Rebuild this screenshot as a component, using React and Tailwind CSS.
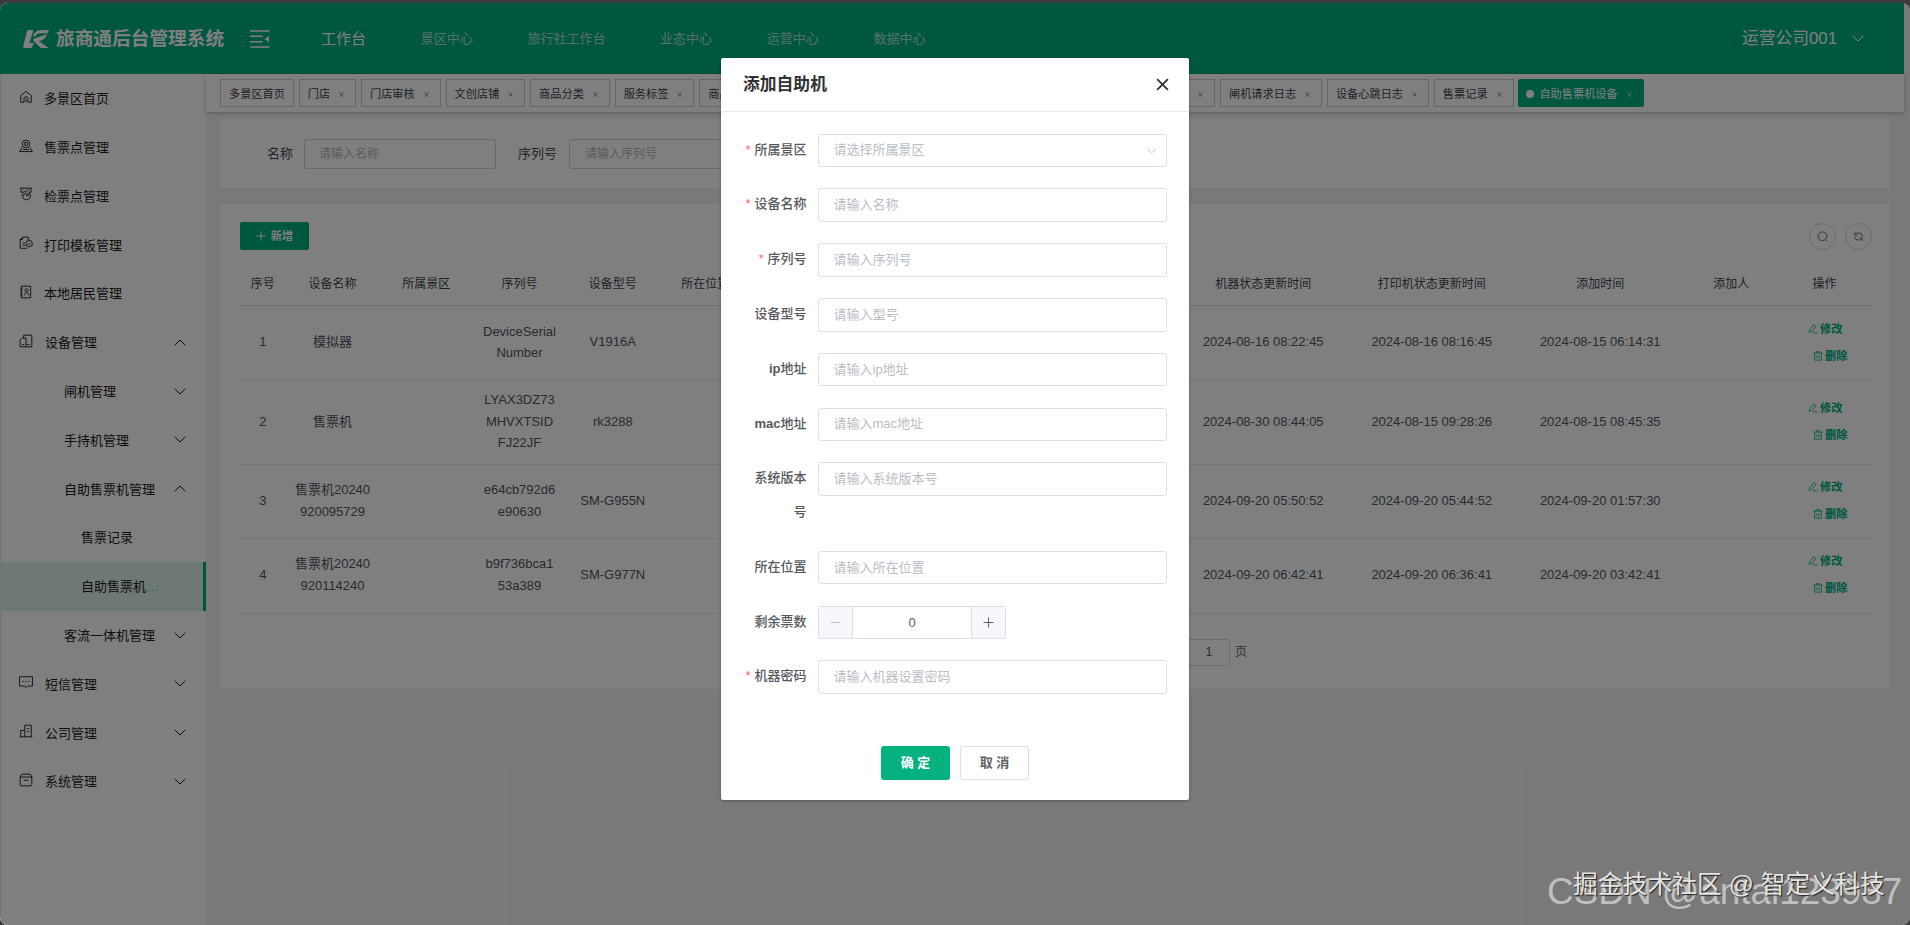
import { useState } from 'react'
import clsx from 'clsx'

// Stroke icon on a 24 grid
const Icon = ({ children, className = '', width = 1.6, box = '0 0 24 24' }) => (
  <svg viewBox={box} className={className} fill="none" stroke="currentColor" strokeWidth={width}>
    {children}
  </svg>
)

const Chevron = ({ up = false, className = '' }) => (
  <svg viewBox="0 0 12 7" className={className} fill="none" stroke="currentColor" strokeWidth="1">
    <path d={up ? 'M0.7 6.2L6 1l5.3 5.2' : 'M0.7 0.8L6 6l5.3-5.2'} />
  </svg>
)

const icons = {
  home: (
    <>
      <path d="M3 9.5L12 2.5l9 7V21h-5.5M3 9.5V21h5.5" />
      <path d="M8.5 21v-6a3.5 3.5 0 0 1 7 0v6M12 21v-6" />
    </>
  ),
  booth: (
    <>
      <circle cx="12" cy="8.5" r="6.5" />
      <circle cx="12" cy="8.5" r="2.8" />
      <path d="M6 14l-5 7.5h22L18 14M7 18h10" />
    </>
  ),
  check: (
    <>
      <path d="M2 2h20M3.5 2v7h5M20.5 2v7h-4M8 6l3 3 6-5" />
      <path d="M6 12c0 6 2 10 6.5 10s7-3 7-7v-3H8.5M6 15l3-3M12 15h5" />
    </>
  ),
  print: (
    <>
      <path d="M14 21H2V6l4-4h10v5M6 2v4H2" />
      <circle cx="17.5" cy="13" r="5.5" />
      <path d="M15 13l2 2 3-3.5M6 12h4M6 16h5" />
    </>
  ),
  resident: (
    <>
      <path d="M4 2h16v20H4zM2 7h4M2 12h4M2 17h4" />
      <circle cx="13" cy="9" r="2.6" />
      <path d="M9 18c0-6 8-6 8 0" />
    </>
  ),
  device: (
    <>
      <path d="M8 7V2h14v20H2V10l3-3h7v15" />
      <path d="M5.5 18H9M14 18h4" />
    </>
  ),
  message: (
    <>
      <path d="M1 3h22v16h-8.5l-2.5 2.5L9.5 19H1z" />
      <path d="M5.5 11H8M10.8 11h2.5M16 11h2.5" />
    </>
  ),
  company: (
    <>
      <path d="M1 22h22M10 22V2h11v20M3 22V11h7" />
      <path d="M14 8h3.5M14 13h3.5" />
    </>
  ),
  system: (
    <>
      <path d="M2 7v13q0 2 2 2h16q2 0 2-2V7zM2 7l3-5h14l3 5" />
      <path d="M8 12.5h8" />
    </>
  ),
}

const menu = [
  { label: '多景区首页', icon: 'home', level: 1 },
  { label: '售票点管理', icon: 'booth', level: 1 },
  { label: '检票点管理', icon: 'check', level: 1 },
  { label: '打印模板管理', icon: 'print', level: 1 },
  { label: '本地居民管理', icon: 'resident', level: 1 },
  { label: '设备管理', icon: 'device', level: 1, arrow: 'up' },
  { label: '闸机管理', level: 2, arrow: 'down' },
  { label: '手持机管理', level: 2, arrow: 'down' },
  { label: '自助售票机管理', level: 2, arrow: 'up' },
  { label: '售票记录', level: 3 },
  { label: '自助售票机', level: 3, active: true },
  { label: '客流一体机管理', level: 2, arrow: 'down' },
  { label: '短信管理', icon: 'message', level: 1, arrow: 'down' },
  { label: '公司管理', icon: 'company', level: 1, arrow: 'down' },
  { label: '系统管理', icon: 'system', level: 1, arrow: 'down' },
]

const navs = ['景区中心', '旅行社工作台', '业态中心', '运营中心', '数据中心']

const tabs = [
  { label: '多景区首页', fixed: true },
  { label: '门店' },
  { label: '门店审核' },
  { label: '文创店铺' },
  { label: '商品分类' },
  { label: '服务标签' },
  { label: '商品', wide: true },
  { label: '闸机请求日志' },
  { label: '设备心跳日志' },
  { label: '售票记录' },
  { label: '自助售票机设备', active: true },
]

const rows = [
  { h: 'h-[75px]', name: ['模拟器'], sn: ['DeviceSerial', 'Number'], model: 'V1916A', t1: '2024-08-16 08:22:45', t2: '2024-08-16 08:16:45', t3: '2024-08-15 06:14:31' },
  { h: 'h-[84px]', name: ['售票机'], sn: ['LYAX3DZ73', 'MHVXTSID', 'FJ22JF'], model: 'rk3288', t1: '2024-08-30 08:44:05', t2: '2024-08-15 09:28:26', t3: '2024-08-15 08:45:35' },
  { h: 'h-[74.3px]', name: ['售票机20240', '920095729'], sn: ['e64cb792d6', 'e90630'], model: 'SM-G955N', t1: '2024-09-20 05:50:52', t2: '2024-09-20 05:44:52', t3: '2024-09-20 01:57:30' },
  { h: 'h-[74.3px]', name: ['售票机20240', '920114240'], sn: ['b9f736bca1', '53a389'], model: 'SM-G977N', t1: '2024-09-20 06:42:41', t2: '2024-09-20 06:36:41', t3: '2024-09-20 03:42:41' },
]

const grid =
  'grid grid-cols-[45.5px_94px_93.5px_93px_93.5px_91.5px_428px_168.5px_168.5px_168.5px_93.5px_93px] items-center text-center'

const Header = () => (
  <header className="flex h-[71px] shrink-0 items-center bg-[#00ae7e] text-white">
    <svg viewBox="0 0 26 20" className="ml-[23px] h-5 w-[26px]" fill="currentColor">
      <path d="M5 1h5.5L6.5 14H11L8.5 19H1.5Q-0.3 19 0.3 16.5L3.5 4Q4 1.500 5 1z" />
      <path d="M10 7Q12 1 18 1h8l-1.5 3.2H17Q13 4.2 12 8z" />
      <path d="M10 10l14-5q-1.5 6-8 7L25.5 19H18l-7.5-7z" />
    </svg>
    <h1 className="ml-[7px] mt-[2px] w-[168px] whitespace-nowrap text-[18.7px] font-bold">旅商通后台管理系统</h1>
    <svg viewBox="0 0 20 18" className="ml-[26px] mt-px h-[18px] w-5" fill="none" stroke="currentColor" strokeWidth="1.6">
      <path d="M0 1h19.5M0 6.3h12.5M0 11.7h12.5M0 17h19.5" />
      <path d="M19 6v6l-4.5-3z" fill="currentColor" stroke="none" />
    </svg>
    <nav className="ml-[51px] flex items-center gap-[54.7px]">
      <span className="mt-px text-[15px]">工作台</span>
      {navs.map(n => (
        <span key={n} className="text-[13px] text-white/65">{n}</span>
      ))}
    </nav>
    <div className="ml-auto mr-[40px] flex items-center text-[16.8px]">
      运营公司001
      <Chevron className="ml-[15px] h-[7px] w-3" />
    </div>
  </header>
)

const Sidebar = () => (
  <aside className="w-[206px] shrink-0 border-l border-[#e4e4e4] bg-white text-[13px] text-[#1c1c1c]">
    {menu.map(m => (
      <div
        key={m.label + m.level}
        className={clsx(
          'flex h-[48.8px] items-center',
          m.level === 1 && 'pl-[18px]',
          m.level === 2 && 'pl-[63px]',
          m.level === 3 && 'pl-[80px]',
          m.active && 'border-r-[3px] border-[#00ae7e] bg-[#dcf2ea]'
        )}
      >
        {m.icon && (
          <Icon className={clsx('mb-[3px] h-[14px] w-[14px]', m.arrow ? 'mr-3' : 'mr-[11px]')} width={1.6}>
            {icons[m.icon]}
          </Icon>
        )}
        <span className="pt-px">{m.label}</span>
        {m.active && <span className="text-[#9ab5ab]">…</span>}
        {m.arrow && <Chevron up={m.arrow === 'up'} className="ml-auto mr-5 h-[7px] w-3" />}
      </div>
    ))}
  </aside>
)

const TabBar = () => (
  <div className="relative z-10 flex h-[38px] shrink-0 items-center gap-[4.8px] bg-white pl-[14px] text-[11.2px] text-[#3a3f46] shadow-[0_1px_4px_rgba(0,0,0,0.25)]">
    {tabs.map(t => (
      <div
        key={t.label}
        className={clsx(
          'flex h-7 shrink-0 items-center whitespace-nowrap border px-2 pt-[2px]',
          t.active ? 'rounded-[2px] border-[#00ae7e] bg-[#00ae7e] text-white' : 'border-[#c9cdd1]',
          t.wide && 'w-[516px]'
        )}
      >
        {t.active && <span className="-ml-px mr-[5px] h-2 w-2 rounded-full bg-white" />}
        {t.label}
        {!t.fixed && (
          <svg viewBox="0 0 6 6" className={clsx('mr-[3px] h-[5px] w-[5px]', t.wide ? 'ml-auto' : 'ml-[9px]')} fill="none" stroke="currentColor" strokeWidth="0.8">
            <path d="M0.5 0.5l5 5M5.5 0.5l-5 5" />
          </svg>
        )}
      </div>
    ))}
  </div>
)

const Lines = ({ items = [] }) => (
  <div className="leading-[21.5px]">
    {items.map(t => (
      <div key={t}>{t}</div>
    ))}
  </div>
)

const Actions = () => (
  <div className="flex flex-col gap-[11px] pl-[30px] text-[11.2px] font-bold leading-4 text-[#00ae7e]">
    <div className="flex items-center gap-[2px]">
      <Icon className="h-[10px] w-[10px]" width={2}>
        <path d="M3 20l1-6L14 2l5 4L9 18l-6 2zM12 21h11" />
      </Icon>
      修改
    </div>
    <div className="ml-[5px] flex items-center gap-[2px]">
      <Icon className="h-[10px] w-[10px]" width={2}>
        <path d="M1 5h22M8 5V1.5h8V5M4 5v17h16V5M9.5 10v8M14.5 10v8" />
      </Icon>
      删除
    </div>
  </div>
)

const DeviceTable = () => (
  <div className="text-[13px] text-[#51555c]">
    <div className={clsx(grid, 'h-[43px] border-b border-[#d8dce3] text-[12px] text-[#40444a]')}>
      <span>序号</span>
      <span>设备名称</span>
      <span>所属景区</span>
      <span>序列号</span>
      <span>设备型号</span>
      <span>所在位置</span>
      <span />
      <span>机器状态更新时间</span>
      <span>打印机状态更新时间</span>
      <span>添加时间</span>
      <span>添加人</span>
      <span>操作</span>
    </div>
    {rows.map((r, i) => (
      <div key={r.t1} className={clsx(grid, r.h, 'border-b border-[#e6e9ee] pb-[2px]')}>
        <span>{i + 1}</span>
        <Lines items={r.name} />
        <span />
        <Lines items={r.sn} />
        <span>{r.model}</span>
        <span />
        <span />
        <span>{r.t1}</span>
        <span>{r.t2}</span>
        <span>{r.t3}</span>
        <span />
        <Actions />
      </div>
    ))}
  </div>
)

const Content = () => (
  <main className="flex-1 bg-[#f3f3f3] pl-[14px] pr-[14px] pt-[7px]">
    <section className="flex h-[69px] items-center bg-white pl-[47px] pt-px text-[13px] text-[#4a4d52]">
      <span>名称</span>
      <div className="ml-[11px] flex h-[30px] w-[192px] items-center rounded-[3px] border border-[#ccd0d6] pl-[14px] text-[12px] text-[#b3b7be]">
        请输入名称
      </div>
      <span className="ml-[22px]">序列号</span>
      <div className="ml-[12px] flex h-[30px] w-[192px] items-center rounded-[3px] border border-[#ccd0d6] pl-[15px] text-[12px] text-[#b3b7be]">
        请输入序列号
      </div>
    </section>

    <section className="mt-4 h-[485px] bg-white pl-5 pr-[18px] pt-[18px]">
      <div className="flex h-7 items-center justify-between">
        <button className="flex h-7 w-[69px] items-center justify-center gap-[5px] rounded-[2px] bg-[#00ae7e] text-[11.2px] font-bold text-white">
          <Icon className="h-[10px] w-[10px]" width={2.4}>
            <path d="M12 1v22M1 12h22" />
          </Icon>
          新增
        </button>
        <div className="flex gap-[9px] text-[#606266]">
          <button className="flex h-[27px] w-[27px] items-center justify-center rounded-full border border-[#d5d8dd]">
            <Icon className="h-[11px] w-[11px]" width={2}>
              <circle cx="12" cy="11.5" r="9.5" />
              <path d="M18 18l4 4" />
            </Icon>
          </button>
          <button className="flex h-[27px] w-[27px] items-center justify-center rounded-full border border-[#d5d8dd]">
            <Icon className="h-[11px] w-[11px]" width={2}>
              <path d="M4 3v6h6M4.5 8.5Q7 4 12 4q8 0 8.5 8" />
              <path d="M20 21v-6h-6M19.5 15.5Q17 20 12 20q-8 0-8.5-8" />
            </Icon>
          </button>
        </div>
      </div>
      <div className="mt-[13px]">
        <DeviceTable />
      </div>
      <div className="mt-[25px] flex h-[27px] items-center justify-end pr-[625px] text-[12px] text-[#606266]">
        <span className="flex h-[27px] w-[42px] items-center justify-center rounded-[2px] border border-[#d5d8dd] text-[13px]">1</span>
        <span className="ml-[5px]">页</span>
      </div>
    </section>
  </main>
)

const Field = ({ label, latin = '', required = false, children }) => (
  <div className="mb-[21.2px] flex">
    <label className="-mt-px mb-px w-[74.5px] shrink-0 pl-[12px] text-right font-medium leading-[33.6px] text-[#55575c]">
      <span className="flex justify-end">
        {required && <span className="mr-1 font-normal text-[#f56c6c]">*</span>}
        <span className="max-w-[53px]">
          {latin && <b>{latin}</b>}
          {label}
        </span>
      </span>
    </label>
    <div className="ml-[11.5px] flex-1">{children}</div>
  </div>
)

const fields = [
  { key: 'scenic', label: '所属景区', hint: '请选择所属景区', required: true, select: true },
  { key: 'name', label: '设备名称', hint: '请输入名称', required: true },
  { key: 'sn', label: '序列号', hint: '请输入序列号', required: true },
  { key: 'model', label: '设备型号', hint: '请输入型号' },
  { key: 'ip', latin: 'ip', label: '地址', hint: '请输入ip地址' },
  { key: 'mac', latin: 'mac', label: '地址', hint: '请输入mac地址' },
  { key: 'version', label: '系统版本号', hint: '请输入系统版本号' },
  { key: 'position', label: '所在位置', hint: '请输入所在位置' },
]

const inputClass =
  'block h-[33.6px] w-full rounded-[3px] border border-[#dcdfe6] bg-white px-[14.5px] pb-px text-[13px] text-[#606266] outline-none placeholder:text-[#b9bdc5]'

const AddDialog = () => {
  const [form, setForm] = useState({})
  const [count, setCount] = useState(0)

  const handleChange = (e) => {
    const { name, value } = e.target
    setForm(prev => ({ ...prev, [name]: value }))
  }

  return (
    <div className="absolute left-[721px] top-[58px] h-[742px] w-[468px] rounded-[2px] bg-white text-[13px] shadow-[0_1px_3px_rgba(0,0,0,0.3)]">
      <div className="flex h-[54px] items-center justify-between border-b border-[#ebebeb] pl-[22px] pr-[20px] text-[#303133]">
        <h2 className="text-[16.8px] font-bold">添加自助机</h2>
        <Icon className="h-[13px] w-[13px]" width={3.2}>
          <path d="M2 2l20 20M22 2L2 22" />
        </Icon>
      </div>
      <div className="pl-[11px] pr-[22px] pt-[21.7px]">
        {fields.map(f => (
          <Field key={f.key} label={f.label} latin={f.latin} required={f.required}>
            <div className="relative">
              <input
                name={f.key}
                value={form[f.key] || ''}
                onChange={handleChange}
                placeholder={f.hint}
                className={inputClass}
              />
              {f.select && <Chevron className="absolute right-[10px] top-[14px] h-[6px] w-[11px] text-[#b8bcc4]" />}
            </div>
          </Field>
        ))}
        <Field label="剩余票数">
          <div className="flex h-[33.6px] w-[188px] overflow-hidden rounded-[3px] border border-[#dcdfe6] text-[#606266]">
            <button
              className="flex w-[34px] items-center justify-center border-r border-[#dcdfe6] bg-[#f5f7fa] text-[#c0c4cc]"
              onClick={() => setCount(Math.max(0, count - 1))}
            >
              <Icon className="h-[11px] w-[11px]" width={2.2}><path d="M1 12h22" /></Icon>
            </button>
            <span className="flex flex-1 items-center justify-center">{count}</span>
            <button
              className="flex w-[34px] items-center justify-center border-l border-[#dcdfe6] bg-[#f5f7fa]"
              onClick={() => setCount(count + 1)}
            >
              <Icon className="h-[11px] w-[11px]" width={2.2}><path d="M12 1v22M1 12h22" /></Icon>
            </button>
          </div>
        </Field>
        <Field label="机器密码" required>
          <input
            name="password"
            value={form.password || ''}
            onChange={handleChange}
            placeholder="请输入机器设置密码"
            className={inputClass}
          />
        </Field>
      </div>
      <div className="mt-[52px] flex justify-center gap-[10px] font-bold">
        <button className="h-[34px] w-[69px] rounded-[3px] bg-[#05b17f] text-white">确 定</button>
        <button className="h-[34px] w-[69px] rounded-[3px] border border-[#dcdfe6] text-[#606266]">取 消</button>
      </div>
    </div>
  )
}

const App = () => (
  <div className="relative h-[925px] w-[1910px] overflow-hidden bg-[#3d393e] pt-[3px] font-['Liberation_Sans','Noto_Sans_CJK_SC',sans-serif]">
    <div className="relative isolate h-[922px] overflow-hidden rounded-[8px] bg-[#f3f3f3]">
      <div className="flex h-full w-[1904px] flex-col">
        <Header />
        <div className="flex min-h-0 flex-1">
          <Sidebar />
          <div className="flex min-w-0 flex-1 flex-col">
            <TabBar />
            <Content />
          </div>
        </div>
      </div>
      <div className="absolute inset-0 z-20 bg-black/50" />
    </div>
    <AddDialog />
    <div className="absolute left-[1547px] top-[871px] whitespace-nowrap text-[36.9px] leading-[42px] text-[#d8d8d8]/75">
      CSDN @antai123987
    </div>
    <div className="absolute left-[1573px] top-[867px] whitespace-nowrap text-[24.8px] leading-[36px] text-[#e4e4e4] [text-shadow:1px_1px_1px_#222]">
      掘金技术社区 @ 智定义科技
    </div>
  </div>
)

export default App
